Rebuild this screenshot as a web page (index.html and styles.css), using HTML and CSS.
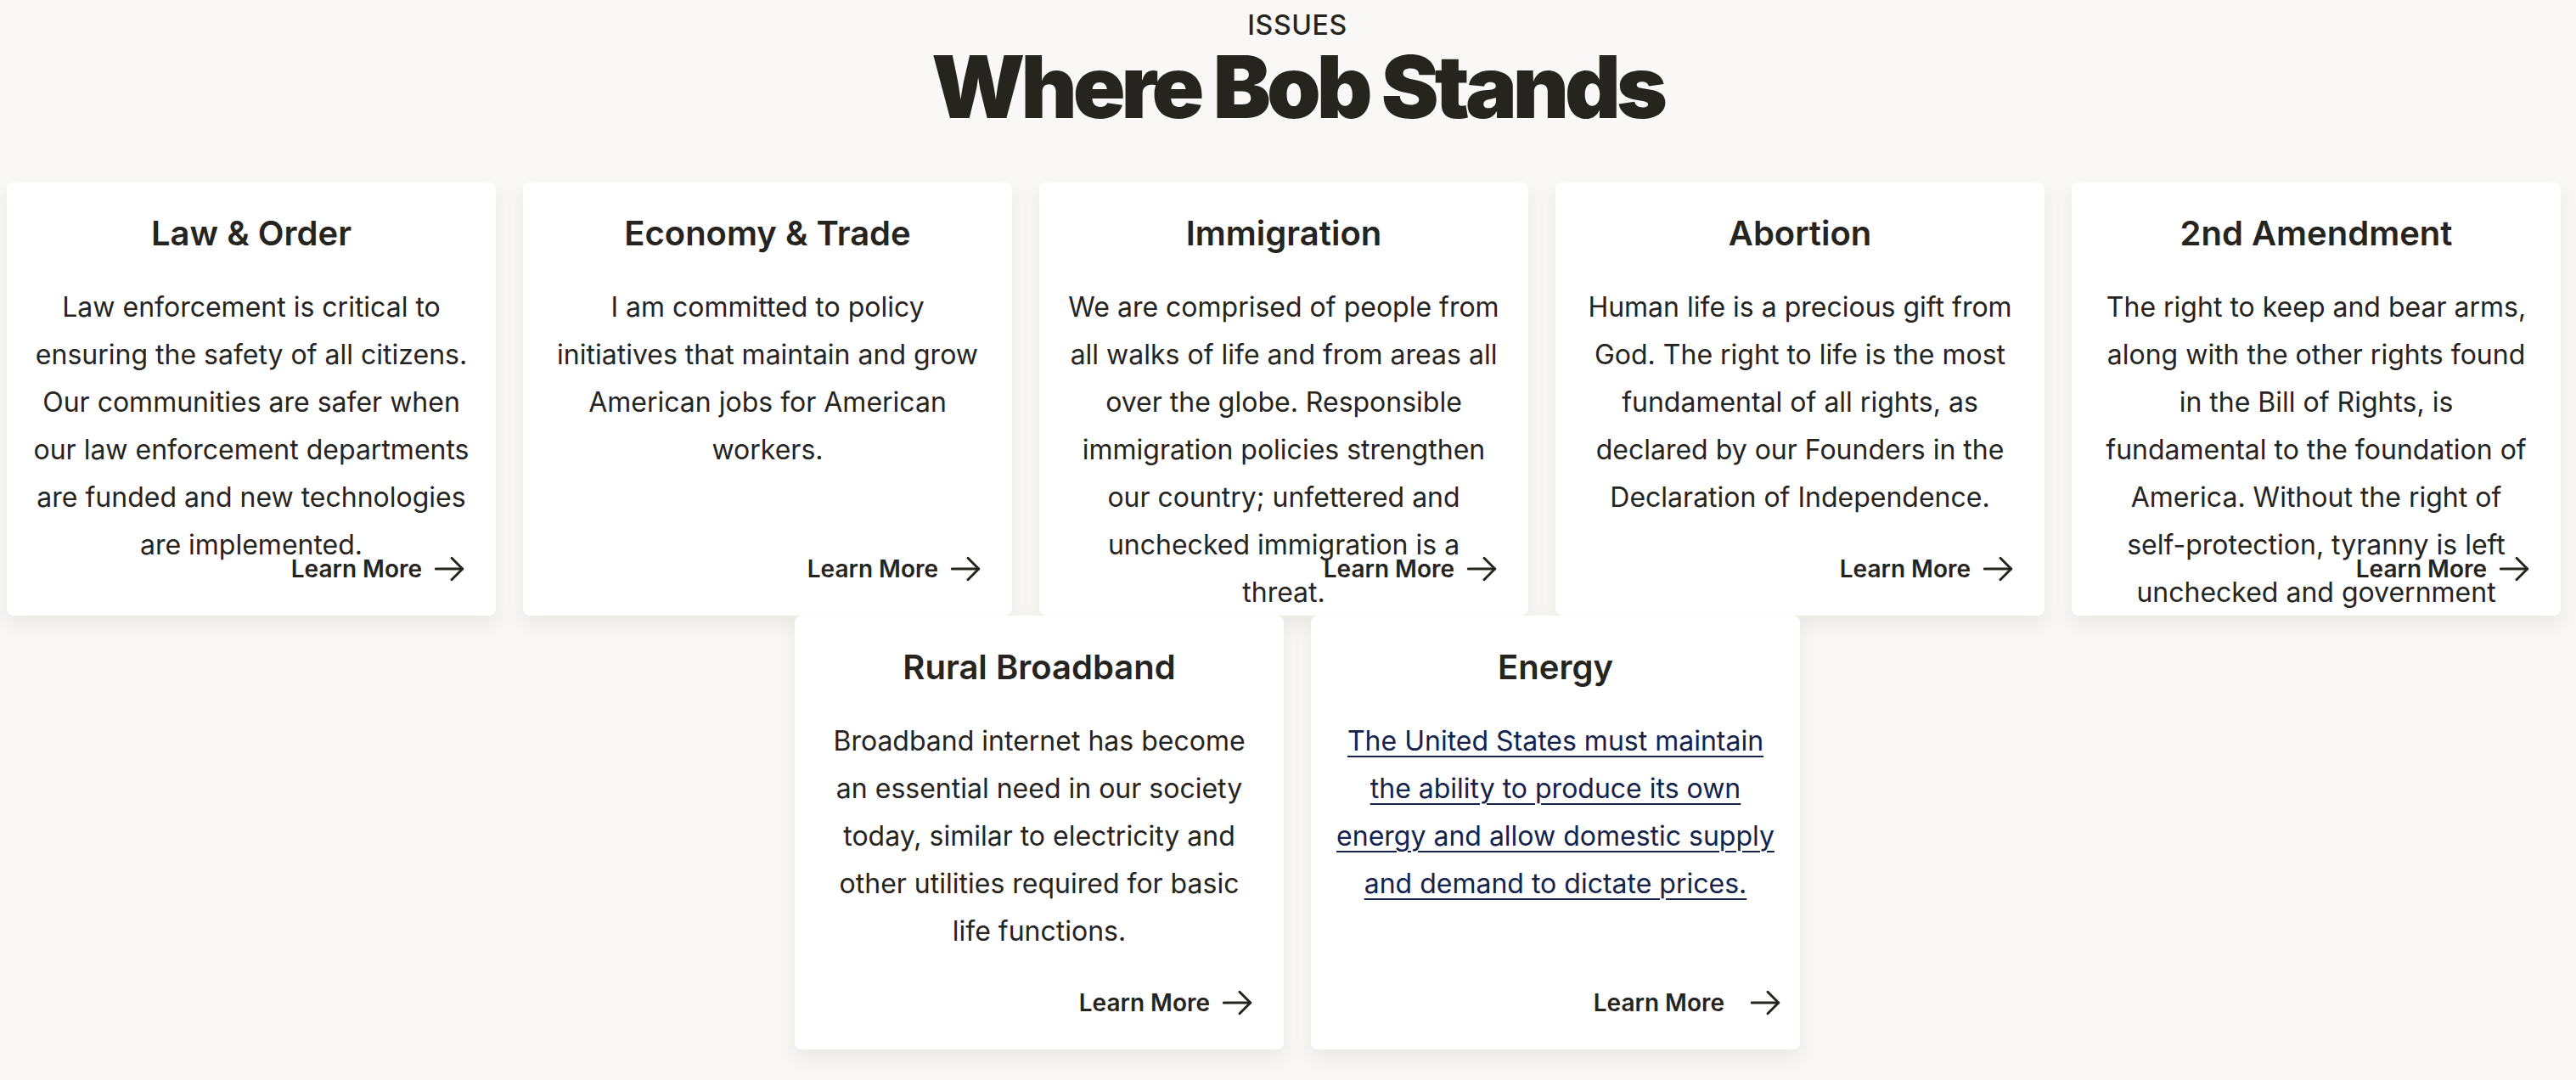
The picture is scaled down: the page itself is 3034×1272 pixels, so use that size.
FILE: index.html
```html
<!DOCTYPE html>
<html lang="en">
<head>
<meta charset="utf-8">
<title>Where Bob Stands</title>
<link rel="stylesheet" href="styles.css">
</head>
<body>
<section class="issues">
  <header class="issues__head">
    <p class="issues__eyebrow">ISSUES</p>
    <h2 class="issues__title">Where Bob Stands</h2>
  </header>

  <div class="issues__row issues__row--first">
    <article class="card">
      <h3 class="card__title">Law &amp; Order</h3>
      <p class="card__text">Law enforcement is critical to ensuring the safety of all citizens. Our communities are safer when our law enforcement departments are funded and new technologies are implemented.</p>
      <a class="card__more" href="#">Learn More
        <svg class="card__arrow" viewBox="0 0 24 24" fill="none" stroke="currentColor" stroke-width="2" stroke-linecap="round" stroke-linejoin="round"><path d="M1.5 12h21"/><path d="M14 3.5l8.5 8.5-8.5 8.5"/></svg>
      </a>
    </article>

    <article class="card">
      <h3 class="card__title">Economy &amp; Trade</h3>
      <p class="card__text">I am committed to policy initiatives that maintain and grow American jobs for American workers.</p>
      <a class="card__more" href="#">Learn More
        <svg class="card__arrow" viewBox="0 0 24 24" fill="none" stroke="currentColor" stroke-width="2" stroke-linecap="round" stroke-linejoin="round"><path d="M1.5 12h21"/><path d="M14 3.5l8.5 8.5-8.5 8.5"/></svg>
      </a>
    </article>

    <article class="card">
      <h3 class="card__title">Immigration</h3>
      <p class="card__text">We are comprised of people from all walks of life and from areas all over the globe. Responsible immigration policies strengthen our country; unfettered and unchecked immigration is a threat.</p>
      <a class="card__more" href="#">Learn More
        <svg class="card__arrow" viewBox="0 0 24 24" fill="none" stroke="currentColor" stroke-width="2" stroke-linecap="round" stroke-linejoin="round"><path d="M1.5 12h21"/><path d="M14 3.5l8.5 8.5-8.5 8.5"/></svg>
      </a>
    </article>

    <article class="card">
      <h3 class="card__title">Abortion</h3>
      <p class="card__text">Human life is a precious gift from God. The right to life is the most fundamental of all rights, as declared by our Founders in the Declaration of Independence.</p>
      <a class="card__more" href="#">Learn More
        <svg class="card__arrow" viewBox="0 0 24 24" fill="none" stroke="currentColor" stroke-width="2" stroke-linecap="round" stroke-linejoin="round"><path d="M1.5 12h21"/><path d="M14 3.5l8.5 8.5-8.5 8.5"/></svg>
      </a>
    </article>

    <article class="card">
      <h3 class="card__title">2nd Amendment</h3>
      <p class="card__text">The right to keep and bear arms, along with the other rights found in the Bill of Rights, is fundamental to the foundation of America. Without the right of <span class="nowrap">self-protection,</span> tyranny is left unchecked and government</p>
      <a class="card__more" href="#">Learn More
        <svg class="card__arrow" viewBox="0 0 24 24" fill="none" stroke="currentColor" stroke-width="2" stroke-linecap="round" stroke-linejoin="round"><path d="M1.5 12h21"/><path d="M14 3.5l8.5 8.5-8.5 8.5"/></svg>
      </a>
    </article>
  </div>

  <div class="issues__row issues__row--second">
    <article class="card">
      <h3 class="card__title">Rural Broadband</h3>
      <p class="card__text">Broadband internet has become an essential need in our society today, similar to electricity and other utilities required for basic life functions.</p>
      <a class="card__more" href="#">Learn More
        <svg class="card__arrow" viewBox="0 0 24 24" fill="none" stroke="currentColor" stroke-width="2" stroke-linecap="round" stroke-linejoin="round"><path d="M1.5 12h21"/><path d="M14 3.5l8.5 8.5-8.5 8.5"/></svg>
      </a>
    </article>

    <article class="card">
      <h3 class="card__title">Energy</h3>
      <p class="card__text"><a class="card__link" href="#">The United States must maintain the ability to produce its own energy and allow domestic supply and demand to dictate prices.</a></p>
      <a class="card__more card__more--wide" href="#">Learn More
        <svg class="card__arrow" viewBox="0 0 24 24" fill="none" stroke="currentColor" stroke-width="2" stroke-linecap="round" stroke-linejoin="round"><path d="M1.5 12h21"/><path d="M14 3.5l8.5 8.5-8.5 8.5"/></svg>
      </a>
    </article>
  </div>
</section>
</body>
</html>
```

FILE: styles.css
```css
html, body {
  margin: 0;
  padding: 0;
}

body {
  background: #f9f8f6;
  color: #26241f;
  font-family: Inter, "Noto Sans", "Liberation Sans", sans-serif;
  overflow-x: hidden;
}

.issues {
  padding: 11px 0 40px 22px;
}

.issues__head {
  text-align: center;
}

.issues__eyebrow {
  margin: 0;
  font-size: 32px;
  line-height: 38px;
  font-weight: 500;
  letter-spacing: 0.02em;
}

.issues__title {
  margin: 2px 0 0;
  font-size: 102px;
  line-height: 102px;
  font-weight: 900;
  letter-spacing: -0.049em;
}

.issues__row {
  display: flex;
  gap: 32px;
}

.issues__row--first {
  margin-top: 61px;
  margin-left: -14px;
}

.issues__row--second {
  justify-content: center;
}

.card {
  position: relative;
  flex: 0 0 576px;
  width: 576px;
  height: 511px;
  box-sizing: border-box;
  padding: 37px 30px 0;
  background: #ffffff;
  border-radius: 8px;
  box-shadow: 0 10px 22px rgba(40, 36, 30, 0.08);
  overflow: hidden;
  text-align: center;
}

.card__title {
  margin: 0;
  font-size: 40px;
  line-height: 48px;
  font-weight: 600;
}

.card__text {
  margin: 35px 0 0;
  font-size: 32px;
  line-height: 56px;
  font-weight: 400;
}

.nowrap {
  white-space: nowrap;
}

.card__link {
  color: #14234d;
  text-decoration: underline;
  text-decoration-thickness: 2px;
  text-underline-offset: 6px;
}

.card__more {
  position: absolute;
  right: 37px;
  bottom: 37px;
  display: flex;
  align-items: center;
  gap: 14px;
  color: #26241f;
  text-decoration: none;
  font-size: 28px;
  line-height: 34px;
  font-weight: 600;
}

.card__more--wide {
  right: 23px;
  gap: 30px;
}

.card__arrow {
  width: 36px;
  height: 36px;
  display: block;
}
```
